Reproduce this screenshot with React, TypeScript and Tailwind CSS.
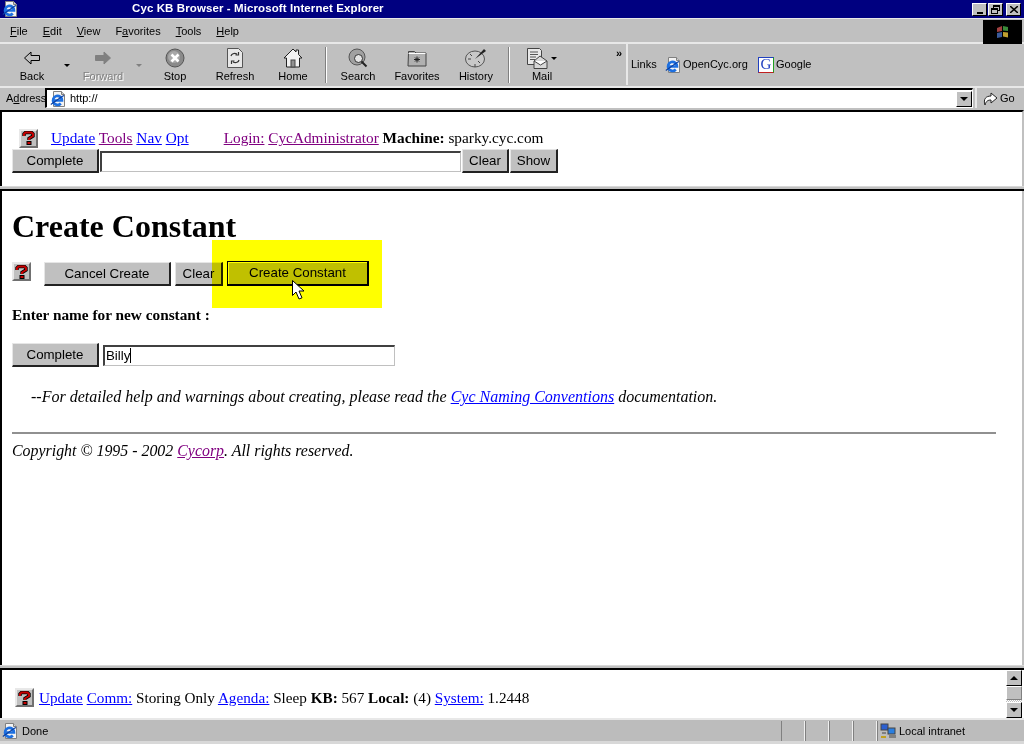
const UI = "font-['Liberation_Sans',Arial,sans-serif]";
const SERIF = "font-['Liberation_Serif','Times_New_Roman',serif]";

function IeIcon({ size = 16 }: { size?: number }) {
  return (
    <svg width={size} height={size} viewBox="0 0 16 16" className="shrink-0">
      <path d="M3.500.5h8l3 3v12h-11z" fill="#f4f4f4" stroke="#808080" />
      <path d="M11.500.5v3h3" fill="#d0d0d0" stroke="#808080" />
      <path d="M3.500 9.500h8.500A4.500 4.500 0 1 0 10.800 12.500" fill="none" stroke="#1c6fe0" strokeWidth="2.600" />
      <path d="M.8 13.500C3 12 11 6 14 4.500" fill="none" stroke="#0b3fa0" strokeWidth="1.100" />
    </svg>
  );
}

function HelpIcon() {
  return (
    <div className="w-[19px] h-[19px] flex items-center justify-center bg-[#c0c0c0] border-2 border-t-[#e8e8e8] border-l-[#e8e8e8] border-r-[#707070] border-b-[#707070] shrink-0">
      <svg width="13" height="14" viewBox="0 0 13 14">
        <path d="M2 5V3l1.500-1.500h6L11 3v2L7 7.500V9" fill="none" stroke="#000" strokeWidth="3.400" />
        <path d="M2 5V3l1.500-1.500h6L11 3v2L7 7.500V9" fill="none" stroke="#c80000" strokeWidth="2" />
        <rect x="5" y="10.500" width="4" height="3" fill="#c80000" stroke="#000" strokeWidth="1" />
      </svg>
    </div>
  );
}

function ToolIcon({ name }: { name: string }) {
  if (name === "Back" || name === "Forward") {
    const flip = name === "Forward";
    return (
      <svg width="18" height="14" viewBox="0 0 18 14" style={flip ? { transform: "scaleX(-1)" } : undefined}>
        <path d="M8 1L1.500 7 8 13V9.500h8.500v-5H8z" fill={flip ? "#808080" : "#c0c0c0"} stroke={flip ? "#808080" : "#000"} />
      </svg>
    );
  }
  if (name === "Stop") {
    return (
      <svg width="20" height="20" viewBox="0 0 20 20">
        <circle cx="10" cy="10" r="9" fill="#8a8a8a" stroke="#555" />
        <circle cx="9" cy="9" r="6" fill="#a8a8a8" />
        <path d="M6.500 6.500l7 7M13.500 6.500l-7 7" stroke="#fff" strokeWidth="2.600" />
      </svg>
    );
  }
  if (name === "Refresh") {
    return (
      <svg width="18" height="20" viewBox="0 0 18 20">
        <path d="M1.500.5h11l4 4v15h-15z" fill="#e8e8e8" stroke="#555" />
        <path d="M5 8c.5-2 3-3.500 6-2M12.500 4v3h-3M13 12c-.5 2-3 3.500-6 2M5.500 16v-3h3" fill="none" stroke="#333" strokeWidth="1.200" />
      </svg>
    );
  }
  if (name === "Home") {
    return (
      <svg width="20" height="20" viewBox="0 0 20 20">
        <path d="M1 10L10 1l3 3V2h2.500v4.500L19 10h-2.500v9h-13v-9z" fill="#f2f2f2" stroke="#222" />
        <rect x="8" y="12" width="4" height="7" fill="#909090" stroke="#444" />
      </svg>
    );
  }
  if (name === "Search") {
    return (
      <svg width="20" height="20" viewBox="0 0 20 20">
        <circle cx="9" cy="9" r="8" fill="#a0a0a0" stroke="#555" />
        <circle cx="10.500" cy="10.500" r="4" fill="#e4e4e4" stroke="#333" />
        <path d="M13.500 13.500l5 5" stroke="#222" strokeWidth="2" />
      </svg>
    );
  }
  if (name === "Favorites") {
    return (
      <svg width="20" height="18" viewBox="0 0 20 18">
        <path d="M1.500 4V2.500h6L9 4h10v13H1z" fill="#b0b0b0" stroke="#444" />
        <path d="M1.500 4.500h17" stroke="#fff" />
        <path d="M10 7.500v6M7 10.500h6M8 8.500l4 4M12 8.500l-4 4" stroke="#222" />
      </svg>
    );
  }
  if (name === "History") {
    return (
      <svg width="22" height="20" viewBox="0 0 22 20">
        <ellipse cx="10" cy="11" rx="9.500" ry="8" fill="#c8c8c8" stroke="#555" />
        <path d="M10 11L19 1l2 2z" fill="#222" />
        <path d="M3 11h3M10 16v3M5 6l2 2M15 15l-2-2" stroke="#444" />
      </svg>
    );
  }
  return (
    <svg width="21" height="21" viewBox="0 0 21 21" className="mr-[10px]">
      <path d="M.5.500h12l2 2v14H.5z" fill="#e8e8e8" stroke="#444" />
      <path d="M3 4h8M3 6.500h8M3 9h6M3 11.500h5" stroke="#555" />
      <path d="M7 13l6-5 7 5v7.500H7z" fill="#d8d8d8" stroke="#444" />
      <path d="M7 13l6.500 4 6.500-4" fill="#fff" stroke="#444" />
    </svg>
  );
}

function ToolButton({ name, width, disabled }: { name: string; width: string; disabled?: boolean }) {
  return (
    <div className={`${width} h-[42px] flex flex-col items-center justify-end shrink-0`}>
      <div className="h-[24px] mb-[-1px] flex items-center justify-center">
        <ToolIcon name={name} />
      </div>
      <span className={`text-[11px] leading-[14px] mb-[3px] ${disabled ? "text-[#808080] [text-shadow:1px_1px_0_#fff]" : "text-black"}`}>
        {name}
      </span>
    </div>
  );
}

function Caret({ className = "", color = "border-t-black" }: { className?: string; color?: string }) {
  return <div className={`w-0 h-0 border-x-[3px] border-x-transparent border-t-[3px] ${color} ${className}`} />;
}

function ToolSep({ width }: { width: string }) {
  return (
    <div className={`${width} h-full flex justify-center items-center shrink-0`}>
      <div className="w-[2px] h-[36px] border-l border-l-[#808080] border-r border-r-white" />
    </div>
  );
}

function FormButton({ children, className = "" }: { children: React.ReactNode; className?: string }) {
  return (
    <button className={`bg-[#c0c0c0] border-t border-l border-t-[#e6e6e6] border-l-[#e6e6e6] border-r-2 border-b-2 border-r-[#222] border-b-[#222] text-[13.3px] leading-none text-black flex items-center justify-center shrink-0 ${UI} ${className}`}>
      {children}
    </button>
  );
}

function SerifLink({ children, visited }: { children: React.ReactNode; visited?: boolean }) {
  return <a className={`underline ${visited ? "text-[#800080]" : "text-[#0000ff]"}`}>{children}</a>;
}

function StatusCell() {
  return <div className="w-[24px] h-full border-l border-l-[#808080] border-r border-r-[#f0f0f0] shrink-0" />;
}

function Divider() {
  return (
    <div className="h-[5px] bg-[#c0c0c0] border-t border-t-[#d8d8d8] border-b-2 border-b-black shrink-0" />
  );
}

export default function App() {
  return (
    <div className={`w-[1024px] h-[744px] overflow-hidden flex flex-col bg-[#c0c0c0] relative ${UI}`}>
      {/* title bar */}
      <div className="h-[18px] bg-[#000080] flex items-center shrink-0">
        <div className="w-[16px] ml-[2px] mt-[-1px]"><IeIcon /></div>
        <span className="ml-[114px] text-white text-[11.5px] font-bold tracking-[0.1px] leading-none">
          Cyc KB Browser - Microsoft Internet Explorer
        </span>
        <div className="ml-auto mr-[3px] flex items-center">
          <div className="w-[15px] h-[13px] bg-[#c0c0c0] border border-t-white border-l-white border-r-black border-b-black flex items-end justify-center pb-[1px]">
            <div className="w-[6px] h-[2px] bg-black" />
          </div>
          <div className="w-[15px] h-[13px] ml-[1px] bg-[#c0c0c0] border border-t-white border-l-white border-r-black border-b-black relative mr-[3px]">
            <div className="absolute left-[4px] top-[1px] w-[7px] h-[6px] border border-black border-t-2" />
            <div className="absolute left-[2px] top-[4px] w-[7px] h-[6px] border border-black border-t-2 bg-[#c0c0c0]" />
          </div>
          <div className="w-[15px] h-[13px] bg-[#c0c0c0] border border-t-white border-l-white border-r-black border-b-black flex items-center justify-center">
            <svg width="8" height="7" viewBox="0 0 8 7"><path d="M0 0l8 7M8 0L0 7" stroke="#000" strokeWidth="1.5" /></svg>
          </div>
        </div>
      </div>

      {/* menu bar */}
      <div className="h-[26px] pt-[2px] border-t border-t-[#e8e8e8] border-b-2 border-b-[#e8e8e8] flex items-center shrink-0 text-[11px] text-black">
        <div className="flex items-center pl-[10px] gap-[15px] flex-1">
          <span><u>F</u>ile</span>
          <span><u>E</u>dit</span>
          <span><u>V</u>iew</span>
          <span>F<u>a</u>vorites</span>
          <span><u>T</u>ools</span>
          <span><u>H</u>elp</span>
        </div>
        <div className="w-[39px] h-[24px] mr-[2px] bg-black flex items-center justify-center shrink-0">
          <svg width="16" height="14" viewBox="0 0 16 14" className="blur-[0.5px]">
            <path d="M2 3l5-2v5l-5 1z" fill="#a04040" />
            <path d="M8 1l5 1v4l-5-.5z" fill="#3a8a3a" />
            <path d="M2 8l5-1v5l-5 1z" fill="#3a5a9a" />
            <path d="M8 7l5 .5v5l-5-1z" fill="#c0a030" />
          </svg>
        </div>
      </div>

      {/* toolbar */}
      <div className="h-[42px] flex items-stretch shrink-0 text-[11px] text-black pl-[4px]">
        <ToolButton name="Back" width="w-[56px]" />
        <div className="w-[14px] h-full flex items-center justify-center"><Caret /></div>
        <ToolButton name="Forward" width="w-[58px]" disabled />
        <div className="w-[14px] h-full flex items-center justify-center"><Caret color="border-t-[#808080]" /></div>
        <ToolButton name="Stop" width="w-[58px]" />
        <ToolButton name="Refresh" width="w-[62px]" />
        <ToolButton name="Home" width="w-[54px]" />
        <ToolSep width="w-[12px]" />
        <ToolButton name="Search" width="w-[52px]" />
        <ToolButton name="Favorites" width="w-[66px]" />
        <ToolButton name="History" width="w-[52px]" />
        <ToolSep width="w-[14px]" />
        <div className="relative">
          <ToolButton name="Mail" width="w-[52px]" />
          <Caret className="absolute left-[35px] top-[13px]" />
        </div>
        <div className="w-[58px] flex justify-end pr-[4px] pt-[4px] shrink-0">
          <span className="text-[11px] leading-none font-bold">»</span>
        </div>
        <div className="border-l-2 border-l-[#e8e8e8] flex items-center pl-[3px] flex-1 mb-[1px]">
          <span className="w-[34px]">Links</span>
          <div className="flex items-center gap-[2px] w-[93px]"><IeIcon /><span>OpenCyc.org</span></div>
          <div className="flex items-center gap-[2px]">
            <div className="w-[16px] h-[16px] bg-white border border-t-[#2040c0] border-l-[#2040c0] border-r-[#20a020] border-b-[#c02020] flex items-center justify-center">
              <span className={`${SERIF} text-[#2040c0] text-[15px] leading-none`}>G</span>
            </div>
            <span>Google</span>
          </div>
        </div>
      </div>

      {/* address bar */}
      <div className="h-[22px] border-t-2 border-t-[#e8e8e8] flex items-center shrink-0 text-[11px] text-black">
        <span className="ml-[6px] w-[39px]">A<u>d</u>dress</span>
        <div className="w-[928px] h-[20px] bg-white border-t-2 border-l-2 border-t-black border-l-black border-r border-b border-r-white border-b-white flex items-center">
          <div className="ml-[3px] mr-[4px]"><IeIcon /></div>
          <span>http://</span>
          <div className="ml-auto w-[16px] h-[16px] bg-[#c0c0c0] border border-t-white border-l-white border-r-black border-b-black flex items-center justify-center">
            <Caret className="border-x-[4px] border-t-[4px]" />
          </div>
        </div>
        <div className="ml-[2px] h-full border-l-2 border-l-[#e8e8e8] flex items-center pl-[6px] gap-[2px] flex-1">
          <svg width="15" height="16" viewBox="0 0 15 16">
            <path d="M2 15C0 9 3 6 8 6V3l6 5-6 5v-3c-3 0-5 1-6 5z" fill="#fff" stroke="#222" />
          </svg>
          <span>Go</span>
        </div>
      </div>

      {/* frameset */}
      <div className={`h-[610px] bg-white flex flex-col shrink-0 ${SERIF} text-[16px] text-black`}>
        <div className="h-[2px] bg-[#c0c0c0] shrink-0" />
        {/* top frame */}
        <div className="h-[76px] border-t-2 border-t-black border-l-2 border-l-black border-r-2 border-r-[#c0c0c0] shrink-0 pt-[15px] pl-[10px]">
          <div className="flex items-center h-[22px] pl-[7px]">
            <HelpIcon />
            <div className="ml-[13px] whitespace-pre leading-none text-[15.3px]">
              <SerifLink>Update</SerifLink>{" "}
              <SerifLink visited>Tools</SerifLink>{" "}
              <SerifLink>Nav</SerifLink>{" "}
              <SerifLink>Opt</SerifLink>
              <span className="inline-block w-[35px]" />
              <SerifLink visited>Login:</SerifLink>{" "}
              <SerifLink visited>CycAdministrator</SerifLink>{" "}
              <b>Machine:</b>{" "}sparky.cyc.com
            </div>
          </div>
          <div className="flex items-start">
            <FormButton className="w-[87px] h-[24px]">Complete</FormButton>
            <div className="w-[361px] h-[21px] mt-[2px] ml-[1px] border-t-2 border-l-2 border-t-[#404040] border-l-[#404040] border-b border-r border-b-[#c0c0c0] border-r-[#c0c0c0] bg-white" />
            <FormButton className="w-[47px] h-[24px] ml-[1px]">Clear</FormButton>
            <FormButton className="w-[48px] h-[24px] ml-[1px]">Show</FormButton>
          </div>
        </div>
        <Divider />

        {/* main frame */}
        <div className="flex-1 border-l-2 border-l-black border-r-2 border-r-[#c0c0c0] pl-[10px] pr-[26px] min-h-0">
          <h1 className="text-[32px] font-bold leading-[37px] mt-[17px]">Create Constant</h1>
          <div className="flex items-start mt-[17px] h-[26px]">
            <HelpIcon />
            <FormButton className="w-[127px] h-[24px] ml-[13px]">Cancel Create</FormButton>
            <FormButton className="w-[48px] h-[24px] ml-[4px]">Clear</FormButton>
            <button className={`w-[142px] h-[25px] ml-[4px] -mt-[1px] bg-[#c0c0c0] border border-black border-r-2 border-b-2 shadow-[inset_1px_1px_0_#fff] text-[13.3px] leading-none ${UI}`}>
              Create Constant
            </button>
          </div>
          <p className="font-bold leading-[18px] mt-[18px] text-[15.3px]">Enter name for new constant :</p>
          <div className="flex items-center mt-[19px]">
            <FormButton className="w-[87px] h-[24px]">Complete</FormButton>
            <div className={`w-[292px] h-[21px] ml-[4px] border-t-2 border-l-2 border-t-[#404040] border-l-[#404040] border-b border-r border-b-[#c0c0c0] border-r-[#c0c0c0] flex items-center text-[13.3px] ${UI}`}>
              <span className="pl-[1px]">Billy</span>
              <span className="w-px h-[15px] bg-black" />
            </div>
          </div>
          <p className="italic leading-[18px] mt-[21px] pl-[19px]">
            --For detailed help and warnings about creating, please read the{" "}
            <SerifLink>Cyc Naming Conventions</SerifLink> documentation.
          </p>
          <hr className="border-0 h-[2px] bg-[#909090] mt-[26px]" />
          <p className="italic leading-[18px] mt-[8px] text-[15.9px]">
            Copyright © 1995 - 2002 <SerifLink visited>Cycorp</SerifLink>. All rights reserved.
          </p>
        </div>
        <Divider />

        {/* bottom frame */}
        <div className="h-[48px] border-l-2 border-l-black flex shrink-0">
          <div className="flex-1 pl-[13px] pt-[18px] flex items-start">
            <HelpIcon />
            <div className="ml-[5px] whitespace-pre leading-[19px] text-[15.2px]">
              <SerifLink>Update</SerifLink>{" "}<SerifLink>Comm:</SerifLink> Storing Only{" "}
              <SerifLink>Agenda:</SerifLink> Sleep <b>KB:</b> 567 <b>Local:</b> (4){" "}
              <SerifLink>System:</SerifLink> 1.2448
            </div>
          </div>
          <div className="w-[16px] mr-[2px] flex flex-col shrink-0 bg-[repeating-conic-gradient(#c0c0c0_0_25%,#fff_0_50%)] bg-[length:2px_2px]">
            <div className="h-[16px] bg-[#c0c0c0] border border-t-white border-l-white border-r-black border-b-black flex items-center justify-center">
              <div className="w-0 h-0 border-x-[4px] border-x-transparent border-b-[4px] border-b-black" />
            </div>
            <div className="h-[14px] bg-[#c0c0c0] border border-t-white border-l-white border-r-[#808080] border-b-[#808080]" />
            <div className="h-[16px] mt-auto bg-[#c0c0c0] border border-t-white border-l-white border-r-black border-b-black flex items-center justify-center">
              <div className="w-0 h-0 border-x-[4px] border-x-transparent border-t-[4px] border-t-black" />
            </div>
          </div>
        </div>
      </div>

      {/* status bar */}
      <div className="h-[26px] border-t-2 border-t-[#e8e8e8] border-b-[3px] border-b-[#d8d8d8] flex flex-col shrink-0 text-[11px] text-black">
        <div className="flex-1 min-h-0 bg-[#bcbcbc] flex items-center pt-[1px]">
          <div className="ml-[2px]"><IeIcon /></div>
          <span className="ml-[4px]">Done</span>
          <div className="ml-auto flex h-full">
            <StatusCell />
            <StatusCell />
            <StatusCell />
            <StatusCell />
            <div className="w-[147px] flex items-center pl-[2px] border-l border-l-[#808080]">
              <svg width="18" height="16" viewBox="0 0 18 16">
                <rect x="1" y="1" width="7" height="6" fill="#2a5fd0" stroke="#444" />
                <rect x="8" y="5" width="7" height="6" fill="#2a7fe0" stroke="#444" />
                <path d="M2 9h4v2H2zM9 12h7v3H9z" fill="#808080" />
                <path d="M1 13h5v2H1z" fill="#c0a020" />
              </svg>
              <span className="ml-[1px]">Local intranet</span>
            </div>
          </div>
        </div>
      </div>

      {/* yellow highlight over the screenshot */}
      <div className="absolute left-[212px] top-[240px] w-[170px] h-[68px] bg-[#ffff00] mix-blend-multiply pointer-events-none" />
      {/* mouse pointer */}
      <svg className="absolute left-[292px] top-[280px] pointer-events-none" width="14" height="21" viewBox="0 0 14 21">
        <path d="M.5.5v15l3.500-3.500 3 7 3-1.200-3-6.800h5z" fill="#fff" stroke="#000" />
      </svg>
    </div>
  );
}
